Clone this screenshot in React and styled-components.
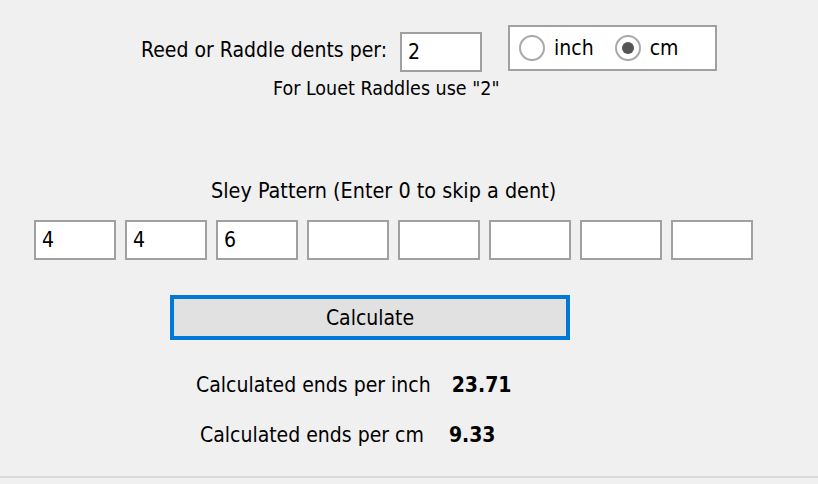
import React, { useState } from "react";
import styled, { createGlobalStyle } from "styled-components";

const GlobalStyle = createGlobalStyle`
    body {
        margin: 0;
        background: #f0f0f0;
        font-family: "DejaVu Sans Condensed", "DejaVu Sans", sans-serif;
        color: #000;
    }
`;

const Window = styled.div`
    height: 478px;
    box-sizing: border-box;
    border-bottom: 2px solid #dadada;
    display: flex;
    flex-direction: column;
    align-items: flex-start;
    font-size: 21px;
`;

const DentsRow = styled.div`
    display: flex;
    align-items: flex-start;
    margin: 25px 0 0 141px;
`;

const Label = styled.label`
    margin-top: ${(p) => p.$top || 0}px;
    line-height: 24px;
    white-space: nowrap;
`;

const TextBox = styled.input`
    width: 82px;
    height: 40px;
    box-sizing: border-box;
    border: 2px solid #a0a0a0;
    background: #fff;
    padding: 0 6px;
    margin: ${(p) => p.$top || 0}px 0 0 ${(p) => p.$left || 0}px;
    font: inherit;
    font-size: 21px;
    color: #000;
    outline: none;
`;

const RadioGroup = styled.div`
    width: 209px;
    height: 46px;
    box-sizing: border-box;
    border: 2px solid #a0a0a0;
    background: #fff;
    margin-left: 26px;
    display: flex;
    align-items: center;
    padding-left: 9px;
    gap: 21px;
`;

const RadioOption = styled.label`
    display: flex;
    align-items: center;
    gap: 9px;
    cursor: pointer;
`;

const RadioCircle = styled.input.attrs({ type: "radio" })`
    appearance: none;
    margin: 0;
    width: 26px;
    height: 26px;
    border-radius: 50%;
    border: 2px solid #a8a8a8;
    background: #fff;
    box-sizing: border-box;
    display: grid;
    place-items: center;
    &:checked::after {
        content: "";
        width: 12px;
        height: 12px;
        border-radius: 50%;
        background: #555;
    }
`;

const Hint = styled.div`
    margin: 6px 0 0 273px;
    font-size: 19.5px;
    line-height: 22px;
`;

const SectionTitle = styled.div`
    margin: 79px 0 0 211px;
    line-height: 24px;
    font-size: 21.4px;
`;

const PatternRow = styled.div`
    display: flex;
    gap: 9px;
    margin: 17px 0 0 34px;
`;

const CalcButton = styled.button`
    width: 400px;
    height: 45px;
    margin: 35px 0 0 170px;
    box-sizing: border-box;
    border: 4px solid #0078d7;
    background: #e1e1e1;
    font: inherit;
    font-size: 21px;
    color: #000;
    cursor: pointer;
    padding: 0;
`;

const ResultRow = styled.div`
    display: flex;
    align-items: baseline;
    margin: ${(p) => p.$top}px 0 0 ${(p) => p.$left}px;
    line-height: 24px;
`;

const ResultValue = styled.span`
    font-weight: bold;
    margin-left: ${(p) => p.$gap}px;
`;

export default function App() {
    const [unit, setUnit] = useState("cm");
    const pattern = ["4", "4", "6", "", "", "", "", ""];

    return (
        <>
            <GlobalStyle />
            <Window>
                <DentsRow>
                    <Label $top={13}>Reed or Raddle dents per:</Label>
                    <TextBox $top={7} $left={13} defaultValue="2" />
                    <RadioGroup>
                        <RadioOption>
                            <RadioCircle name="unit" checked={unit === "inch"} onChange={() => setUnit("inch")} />
                            inch
                        </RadioOption>
                        <RadioOption>
                            <RadioCircle name="unit" checked={unit === "cm"} onChange={() => setUnit("cm")} />
                            cm
                        </RadioOption>
                    </RadioGroup>
                </DentsRow>
                <Hint>For Louet Raddles use "2"</Hint>
                <SectionTitle>Sley Pattern (Enter 0 to skip a dent)</SectionTitle>
                <PatternRow>
                    {pattern.map((v, i) => (
                        <TextBox key={i} defaultValue={v} />
                    ))}
                </PatternRow>
                <CalcButton>Calculate</CalcButton>
                <ResultRow $top={33} $left={196}>
                    Calculated ends per inch
                    <ResultValue $gap={21}>23.71</ResultValue>
                </ResultRow>
                <ResultRow $top={26} $left={200}>
                    Calculated ends per cm
                    <ResultValue $gap={25}>9.33</ResultValue>
                </ResultRow>
            </Window>
        </>
    );
}
